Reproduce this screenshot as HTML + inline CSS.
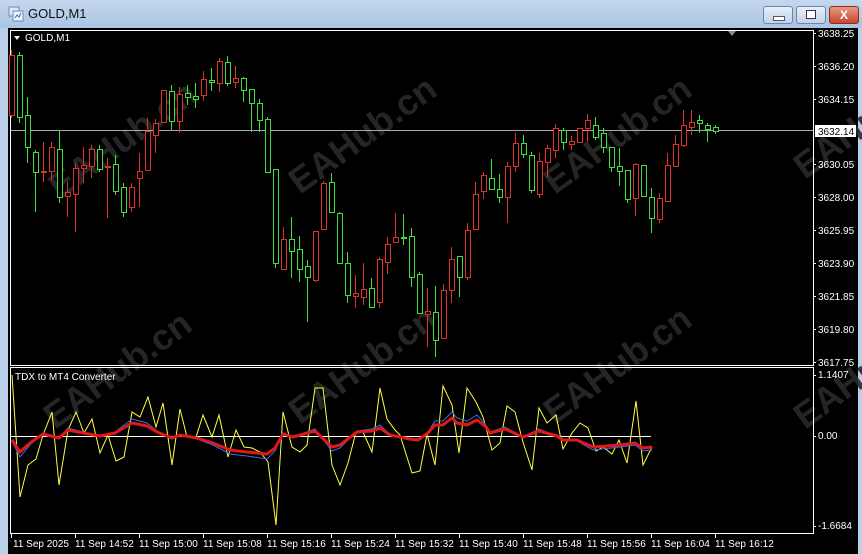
<!DOCTYPE html>
<html><head><meta charset="utf-8"><style>
html,body{margin:0;padding:0;width:862px;height:554px;overflow:hidden;background:#b9d0e8;font-family:"Liberation Sans",sans-serif}
#title{position:absolute;left:0;top:0;width:862px;height:28px;background:linear-gradient(#c4d8ee,#aac4e2)}
#tt{position:absolute;left:28px;top:6px;font-size:13px;color:#111}
.btn{position:absolute;top:6px;height:16px;border:1px solid #6b86a8;border-radius:3px;background:linear-gradient(#e8f0f9,#c0d2e8)}
#blk{position:absolute;left:8px;top:28px;width:850px;height:526px;background:#000}
svg text{font-family:"Liberation Sans",sans-serif}
</style></head><body>
<div id="title">
<svg style="position:absolute;left:8px;top:6px" width="16" height="16"><rect x="1" y="1" width="10" height="9" fill="#dde9f6" stroke="#6a8ab0"/><rect x="5" y="5" width="10" height="10" fill="#eef4fb" stroke="#6a8ab0"/><path d="M7 12l2-3 2 2 2-4" stroke="#3a6ab0" fill="none"/></svg>
<div id="tt">GOLD,M1</div>
<div class="btn" style="left:763px;width:28px"><div style="position:absolute;left:9px;top:9px;width:10px;height:3px;background:#fff;border:1px solid #556"></div></div>
<div class="btn" style="left:796px;width:28px"><div style="position:absolute;left:9px;top:3px;width:8px;height:7px;border:1px solid #334;background:#fff"></div></div>
<div class="btn" style="left:829px;width:28px;background:linear-gradient(#e99a84,#c7452c);border-color:#8a3020"><div style="position:absolute;left:0;width:28px;top:0;text-align:center;color:#fff;font-weight:bold;font-size:12px;line-height:16px">X</div></div>
</div>
<div id="blk"></div>
<svg style="position:absolute;left:0;top:0" width="862" height="554">
<g font-size="36" font-weight="bold" fill="#2a2a2a" opacity="0.9">
<text transform="translate(60,200) rotate(-36)">EAHub.cn</text>
<text transform="translate(300,195) rotate(-36)">EAHub.cn</text>
<text transform="translate(555,195) rotate(-36)">EAHub.cn</text>
<text transform="translate(805,180) rotate(-36)">EAHub.cn</text>
<text transform="translate(55,430) rotate(-36)">EAHub.cn</text>
<text transform="translate(300,425) rotate(-36)">EAHub.cn</text>
<text transform="translate(555,425) rotate(-36)">EAHub.cn</text>
<text transform="translate(805,430) rotate(-36)">EAHub.cn</text>
</g>
<rect x="10.5" y="30.5" width="803" height="335" fill="none" stroke="#fff"/>
<rect x="10.5" y="367.5" width="803" height="166" fill="none" stroke="#fff"/>
<path d="M728 31h8l-4 5z" fill="#888"/>
<path d="M14 36h6l-3 4z" fill="#fff"/>
<text x="25" y="41" font-size="10" fill="#fff">GOLD,M1</text>
<text x="15" y="380" font-size="10" fill="#fff">TDX to MT4 Converter</text>
<line x1="11" y1="130.5" x2="813" y2="130.5" stroke="#aaa"/>
<g id="c"></g>
<g font-size="10" fill="#fff">
<text x="818" y="37">3638.25</text><text x="818" y="70">3636.20</text><text x="818" y="103">3634.15</text>
<text x="818" y="168">3630.05</text><text x="818" y="201">3628.00</text><text x="818" y="234">3625.95</text>
<text x="818" y="267">3623.90</text><text x="818" y="300">3621.85</text><text x="818" y="333">3619.80</text><text x="818" y="366">3617.75</text>
<text x="818" y="378">1.1407</text><text x="818" y="439">0.00</text><text x="818" y="529">-1.6684</text>
</g>
<rect x="815" y="125" width="41" height="12" fill="#fff"/>
<text x="818" y="135" font-size="10" fill="#000">3632.14</text>
<g stroke="#fff"><path d="M813 33.5h3M813 66.5h3M813 99.5h3M813 164.5h3M813 197.5h3M813 230.5h3M813 263.5h3M813 296.5h3M813 329.5h3M813 362.5h3M813 375.5h3M813 436.5h3M813 526.5h3"/>
<path d="M11.5 534v4M75.5 534v4M139.5 534v4M203.5 534v4M267.5 534v4M331.5 534v4M395.5 534v4M459.5 534v4M523.5 534v4M587.5 534v4M651.5 534v4M715.5 534v4"/></g>
<g font-size="10" fill="#fff">
<text x="13" y="547">11 Sep 2025</text><text x="75" y="547">11 Sep 14:52</text><text x="139" y="547">11 Sep 15:00</text><text x="203" y="547">11 Sep 15:08</text><text x="267" y="547">11 Sep 15:16</text><text x="331" y="547">11 Sep 15:24</text><text x="395" y="547">11 Sep 15:32</text><text x="459" y="547">11 Sep 15:40</text><text x="523" y="547">11 Sep 15:48</text><text x="587" y="547">11 Sep 15:56</text><text x="651" y="547">11 Sep 16:04</text><text x="715" y="547">11 Sep 16:12</text>
</g>
<line x1="11" y1="436.5" x2="651" y2="436.5" stroke="#fff"/>
<polyline fill="none" stroke="#ffff40" stroke-width="1" points="12,375 20,497 28,465 36,459 43,435 52,412 59,485 68,430 76,412 84,433 92,419 100,453 108,435 116,461 124,457 132,412 140,417 148,397 156,427 163,403 172,465 180,409 187,437 196,437 203,415 212,437 219,415 228,457 236,430 244,447 252,448 260,452 268,462 276,525 283,412 292,447 300,452 307,445 315,388 323,388 332,465 340,485 348,463 356,432 363,432 372,452 380,388 387,419 395,430 400,435 412,473 420,471 427,434 435,465 443,386 452,405 459,453 467,388 476,402 483,417 492,450 500,443 507,406 515,412 523,442 532,470 539,408 547,423 556,415 563,449 572,433 580,423 588,428 596,451 603,447 612,454 619,440 627,463 636,401 643,465 652,447"/>
<polyline fill="none" stroke="#3a6ee8" stroke-width="1" points="12,441 20,457 30,445 43,433 59,439 68,428 83,432 100,436 115,432 132,419 147,423 157,431 172,439 180,435 197,439 213,445 230,454 247,456 267,459 275,451 283,433 293,437 315,429 332,451 340,448 357,431 372,429 380,425 390,435 410,440 418,441 428,432 435,421 443,421 452,412 457,418 467,421 477,415 486,425 490,432 505,427 523,437 539,429 557,436 563,441 577,441 593,450 620,447 635,445 643,451 652,450"/>
<polyline fill="none" stroke="#e01818" stroke-width="3" stroke-linejoin="round" points="12,440 20,452 30,443 43,434 59,438 68,430 83,433 100,436 115,433 132,423 147,426 157,432 172,438 180,435 197,438 213,443 230,450 247,452 267,454 275,448 283,434 293,437 315,431 332,447 340,445 357,432 372,431 380,428 390,435 410,439 418,440 428,433 435,425 443,425 452,418 457,423 467,425 477,420 486,427 490,433 505,429 523,437 539,431 557,436 563,440 577,440 593,447 620,445 635,443 643,448 652,447"/>
</svg>
<script>
var d=[[11,55,115,50,118,'r'],[19,55,117,52,123,'g'],[27,115,147,97,163,'g'],[35,152,172,150,212,'g'],[43,171,172,142,182,'r'],[51,147,171,142,180,'r'],[59,149,197,130,203,'g'],[67,192,196,182,217,'r'],[75,168,194,163,232,'r'],[83,165,168,147,183,'r'],[91,149,166,145,178,'r'],[99,149,169,145,172,'g'],[107,166,167,158,218,'r'],[115,164,191,155,195,'g'],[123,187,212,183,217,'g'],[131,187,207,183,212,'r'],[139,171,178,153,207,'r'],[147,131,170,118,170,'r'],[155,123,135,119,153,'r'],[163,90,122,90,123,'r'],[171,91,121,85,131,'g'],[179,94,121,87,133,'r'],[187,93,97,85,105,'g'],[195,96,99,83,108,'g'],[203,79,95,71,101,'r'],[211,80,82,68,91,'g'],[219,61,83,58,92,'r'],[227,62,83,56,86,'g'],[235,78,82,66,88,'r'],[243,78,90,77,102,'g'],[251,89,103,89,132,'g'],[259,103,120,99,132,'g'],[267,119,172,117,173,'g'],[275,169,263,169,268,'g'],[283,239,269,227,270,'r'],[291,239,251,217,278,'g'],[299,249,269,236,282,'g'],[307,266,277,260,322,'g'],[315,231,280,231,282,'r'],[323,183,229,181,230,'r'],[331,182,212,173,212,'g'],[339,213,263,212,264,'g'],[347,263,295,252,303,'g'],[355,293,296,275,308,'r'],[363,289,297,263,305,'r'],[371,288,307,278,307,'g'],[379,259,302,257,308,'r'],[387,244,262,237,274,'r'],[395,237,242,213,242,'r'],[403,237,238,214,245,'g'],[411,236,277,228,287,'g'],[419,274,313,272,314,'g'],[427,311,314,288,347,'r'],[435,312,340,286,357,'g'],[443,290,338,284,338,'r'],[451,259,290,247,303,'r'],[459,256,277,256,297,'g'],[467,230,277,223,280,'r'],[475,194,229,182,229,'r'],[483,175,191,172,199,'r'],[491,178,189,159,190,'g'],[499,189,197,174,203,'g'],[507,166,197,162,223,'r'],[515,143,166,133,172,'r'],[523,143,154,135,158,'g'],[531,155,190,152,193,'g'],[539,161,194,153,198,'r'],[547,148,162,145,177,'r'],[555,128,150,124,158,'r'],[563,130,142,128,150,'g'],[571,141,144,136,150,'r'],[579,128,142,128,143,'r'],[587,120,128,114,142,'r'],[595,125,137,117,140,'g'],[603,133,147,128,153,'g'],[611,147,167,147,172,'g'],[619,166,171,148,186,'g'],[627,170,199,170,203,'g'],[635,164,198,163,216,'r'],[643,165,196,165,197,'g'],[651,197,218,188,233,'g'],[659,198,219,193,223,'r'],[667,165,201,153,201,'r'],[675,144,166,135,166,'r'],[683,125,145,110,147,'r'],[691,122,127,110,135,'r'],[699,120,123,115,133,'g'],[707,125,129,123,142,'g'],[715,127,131,125,134,'g']];
var s='';d.forEach(function(c){var col=c[5]=='r'?'#e0302a':'#3ee03e';
s+='<line x1="'+(c[0]+.5)+'" y1="'+c[3]+'" x2="'+(c[0]+.5)+'" y2="'+c[4]+'" stroke="'+col+'"/>';
s+='<rect x="'+(c[0]-2+.5)+'" y="'+(c[1]+.5)+'" width="5" height="'+Math.max(1,c[2]-c[1])+'" fill="#000" stroke="'+col+'"/>';});
document.getElementById('c').innerHTML=s;
</script>
</body></html>
